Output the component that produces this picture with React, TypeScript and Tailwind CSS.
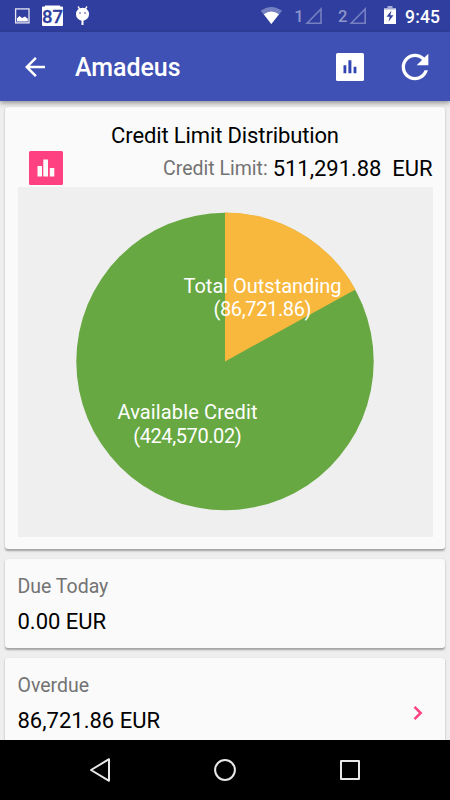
import React from "react";

const TOTAL_OUTSTANDING = 86721.86;
const AVAILABLE_CREDIT = 424570.02;

function StatusBar() {
  return (
    <div className="flex h-8 shrink-0 items-center bg-[#303f9f] text-white">
      <svg className="block h-8 w-[450px]" viewBox="0 0 450 32" fill="none">
        <rect x="15.6" y="8.9" width="13.4" height="14" stroke="#e4e6f4" strokeWidth="1.3" />
        <path d="M17 21.5v-3.2l2.6-2.4 2.4 2 3-1.4 2.8 2.2v2.8z" fill="#fff" />
        <path d="M43 6.500h2V5.500h15V6.500h2a1 1 0 0 1 1 1V25a1 1 0 0 1-1 1H43a1 1 0 0 1-1-1V7.500a1 1 0 0 1 1-1z" fill="#fff" />
        <text x="52.500" y="23" textAnchor="middle" fontSize="18.500" fontWeight="500" fill="#303f9f" stroke="#303f9f" strokeWidth="0.300" fontFamily="Roboto, sans-serif">87</text>
        <path d="M78 6.500l2 2.800M87 6.500l-2 2.800" stroke="#fff" strokeWidth="1.400" />
        <path d="M82.500 19v6" stroke="#fff" strokeWidth="2" />
        <ellipse cx="82.500" cy="14.200" rx="6.500" ry="6.500" fill="#fff" />
        <circle cx="80" cy="13" r="0.800" fill="#303f9f" />
        <circle cx="85" cy="13" r="0.800" fill="#303f9f" />
        <path d="M260.700 10.800Q271.300 3.200 282 10.800L271.300 24z" fill="#7580c2" />
        <path d="M263.800 14.200Q271.300 8.900 279 14.200L271.300 24z" fill="#fff" />
        <text x="294.200" y="22.200" fontSize="16.500" fontWeight="500" fill="#8d96cc" fontFamily="Roboto, sans-serif">1</text>
        <path d="M307 23.200L321 9v14.200z" stroke="#7680c1" strokeWidth="1.600" />
        <text x="338" y="22.200" fontSize="16.500" fontWeight="500" fill="#8d96cc" fontFamily="Roboto, sans-serif">2</text>
        <path d="M351.200 23.200L365.200 9v14.200z" stroke="#7680c1" strokeWidth="1.600" />
        <path d="M384 8h3.500V6h5v2h3.500v2h-12z" fill="#a5acd6" />
        <path d="M384 9.500h12V24h-12z" fill="#fff" />
        <path d="M391.500 10.500l-5 6.200h3.200l-1.200 5 5-6.500h-3.200z" fill="#303f9f" />
        <text x="405" y="22.500" fontSize="17.500" fontWeight="500" fill="#fff" fontFamily="Roboto, sans-serif" textLength="35">9:45</text>
      </svg>
    </div>
  );
}

function Toolbar() {
  return (
    <header className="relative z-10 flex h-[69px] shrink-0 items-center bg-[#3f51b5] pl-5 pr-[15px] text-white shadow-[0_2px_5px_rgba(0,0,0,0.4)]">
      <svg className="h-[30px] w-[30px]" viewBox="0 0 24 24" fill="currentColor">
        <path d="M20 11H7.830l5.590-5.590L12 4l-8 8 8 8 1.410-1.410L7.830 13H20v-2z" />
      </svg>
      <h1 className="ml-[25px] pt-[2px] text-[25px] leading-[30px] font-medium tracking-[-0.05px]">Amadeus</h1>
      <svg className="ml-auto h-7 w-7" viewBox="0 0 28 28">
        <rect width="28" height="28" rx="1.500" fill="#fff" />
        <path d="M7.500 12.300h2.800v8H7.500zM12.400 7.200h3v13.100h-3zM17.600 13.800h2.800v6.500h-2.800z" fill="#3045b2" />
      </svg>
      <svg className="ml-[31px] h-10 w-10" viewBox="0 0 24 24" fill="currentColor">
        <path d="M17.650 6.350C16.200 4.900 14.210 4 12 4c-4.420 0-7.990 3.580-7.990 8s3.570 8 7.990 8c3.730 0 6.840-2.550 7.730-6h-2.080c-.820 2.330-3.040 4-5.650 4-3.310 0-6-2.690-6-6s2.690-6 6-6c1.660 0 3.140.690 4.220 1.780L13 11h7V4l-2.350 2.350z" />
      </svg>
    </header>
  );
}

function Card({ className, children }: { className: string; children: React.ReactNode }) {
  return (
    <section className={`mx-[5px] shrink-0 rounded-[3px] bg-[#fafafa] px-[12.5px] shadow-[0_1.5px_2px_rgba(0,0,0,0.32)] ${className}`}>
      {children}
    </section>
  );
}

function PieChart() {
  const radius = 149;
  const cx = 207;
  const cy = 174.5;
  const angle = (TOTAL_OUTSTANDING / (TOTAL_OUTSTANDING + AVAILABLE_CREDIT)) * Math.PI * 2;
  const x = cx + radius * Math.sin(angle);
  const y = cy - radius * Math.cos(angle);
  return (
    <svg className="block h-[350px] w-[415px] bg-[#efefef]" viewBox="0 0 415 350" fontFamily="Roboto, sans-serif" fontSize="20" fill="#fff" textAnchor="middle">
      <circle cx={cx} cy={cy} r={radius - 0.3} fill="#68a843" />
      <path d={`M${cx} ${cy}V${cy - radius}A${radius} ${radius} 0 0 1 ${x} ${y}z`} fill="#f8b83e" />
      <text x="244.500" y="105.500" textLength="158">Total Outstanding</text>
      <text x="244.500" y="129" textLength="98">(86,721.86)</text>
      <text x="169.500" y="232" textLength="140">Available Credit</text>
      <text x="169.500" y="255.500" textLength="108.500">(424,570.02)</text>
    </svg>
  );
}

function NavigationBar() {
  return (
    <nav className="flex h-[60px] shrink-0 justify-center bg-black">
      <svg className="h-[60px] w-[450px]" viewBox="0 0 450 60" fill="none" stroke="#e8e8e8" strokeWidth="2" strokeLinejoin="round">
        <path d="M91 30L109 19.200v21.600z" />
        <circle cx="225" cy="30" r="9.900" />
        <rect x="341" y="21" width="18" height="18" />
      </svg>
    </nav>
  );
}

export default function App() {
  return (
    <div className="flex h-[800px] w-[450px] flex-col overflow-hidden bg-[#eeeeee] font-[Roboto,sans-serif]">
      <StatusBar />
      <Toolbar />
      <main className="flex min-h-0 flex-1 flex-col gap-[10px] overflow-hidden pt-[6px]">
        <Card className="h-[442px]">
          <h2 className="h-[42px] pt-[15px] text-center text-[22px] leading-7 tracking-[-0.13px] text-black">Credit Limit Distribution</h2>
          <div className="flex h-[38px] items-center pb-px">
            <svg className="ml-[11px] h-[34px] w-[34px]" viewBox="0 0 34 34">
              <rect width="34" height="34" rx="1.500" fill="#ff4081" />
              <path d="M8.500 15H13v10.500H8.500zM14.300 8.500H19v17h-4.700zM20.800 17h4.500v8.500h-4.500z" fill="#fafafa" />
            </svg>
            <span className="ml-auto pt-[3px] text-[19.5px] text-[#737373]">Credit Limit:</span>
            <span className="ml-[5px] pt-px text-[22px] tracking-[-0.03px] whitespace-pre text-black">511,291.88  EUR</span>
          </div>
          <PieChart />
        </Card>
        <Card className="h-[89px]">
          <p className="pt-[15px] text-[19.5px] leading-[26px] text-[#737373]">Due Today</p>
          <p className="mt-[8px] text-[22px] leading-7 text-black">0.00 EUR</p>
        </Card>
        <Card className="h-[110px]">
          <p className="pt-[15px] text-[19.5px] leading-[26px] text-[#737373]">Overdue</p>
          <div className="mt-[7px] flex items-start justify-between">
            <p className="pt-px text-[22px] leading-7 text-black">86,721.86 EUR</p>
            <svg className="mr-[9px] mt-[-1px] h-4 w-3" viewBox="0 0 12 16" fill="none" stroke="#ff4081" strokeWidth="2.500">
              <path d="M2.500 1.800L8.700 8L2.500 14.200" />
            </svg>
          </div>
        </Card>
      </main>
      <NavigationBar />
    </div>
  );
}
